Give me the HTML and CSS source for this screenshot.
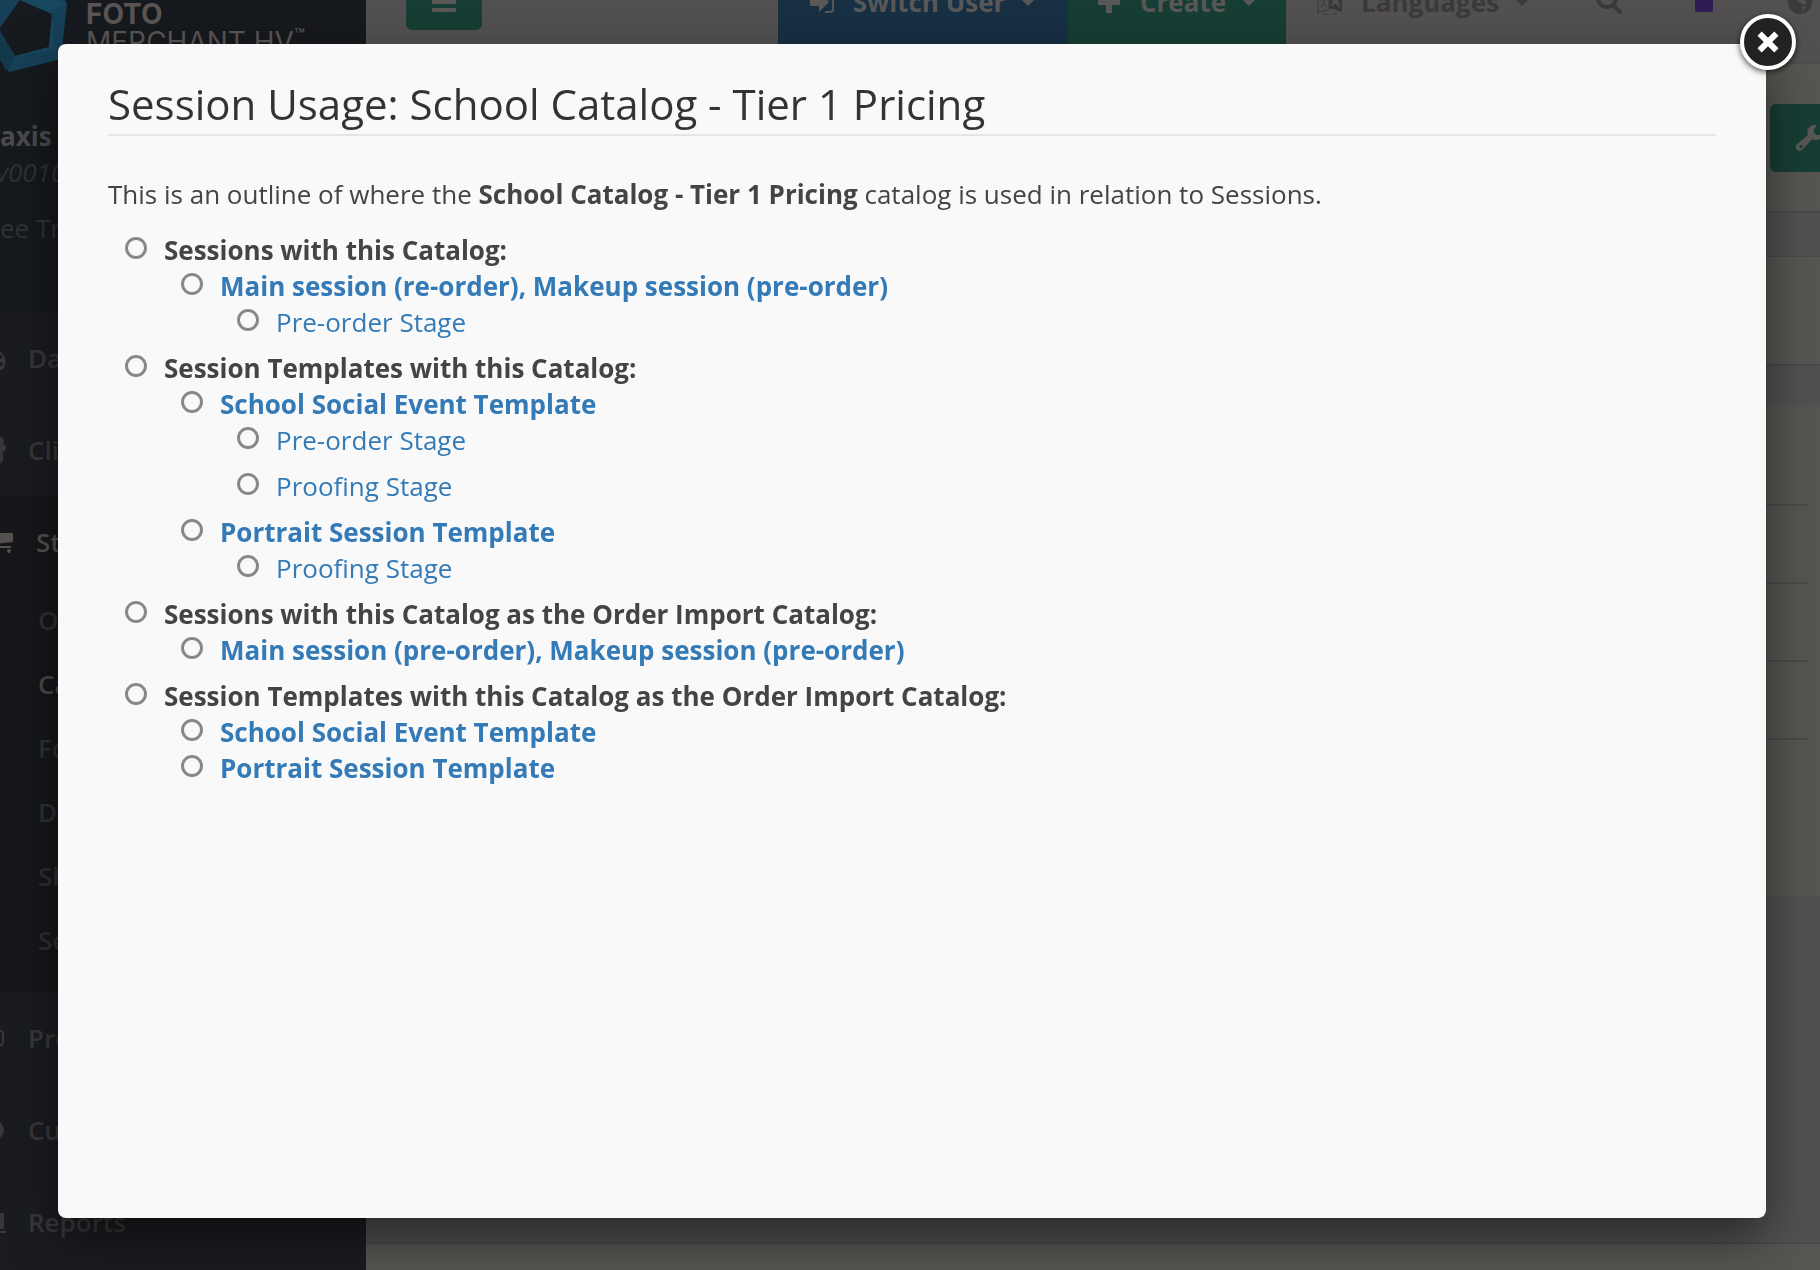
FILE: index.html
```html
<!DOCTYPE html>
<html lang="en">
    <head>
        <meta charset="utf-8">
        <title>Session Usage</title>
        <link rel="stylesheet" href="styles.css">
    </head>
    <body>

        <div class="page">
            <aside class="sidebar">
                <div class="brand">
                    <svg class="brand-mark" viewBox="0 0 68 72">
                        <path fill="#164058" fill-rule="evenodd" d="M-14 -10H60L67 4 61 59 10 72 5 69 -14 30ZM20 0 52 14 49 47 15 56 -1 29Z"/>
                        <path fill="#17465f" d="M20 0 52 14 66 3 40 -6ZM49 47 52 14 55 50 15 56Z"/>
                        <path fill="#14384c" d="M-1 29 15 56 8 71 0 60Z"/>
                    </svg>
                    <div class="brand-name">
                        <b>FOTO</b>
                        <span>MERCHANT HV<sup>™</sup></span>
                    </div>
                </div>
                <div class="profile">
                    <strong>axis</strong>
                    <em>v0010</em>
                    <span>ee Trial</span>
                </div>
                <nav class="menu">
                    <a href="#"><svg class="menu-icon" viewBox="0 0 26 26"><path fill-rule="evenodd" d="M13 4a13 13 0 0 1 11 19q-1 2-3 2H5a13 13 0 0 1 8-21ZM20 10a2 2 0 1 0 0 4 2 2 0 0 0 0-4ZM21 17a2 2 0 1 0 0 4 2 2 0 0 0 0-4Z"/></svg>Dashboard</a>
                    <a href="#"><svg class="menu-icon" viewBox="0 0 26 26"><circle cx="20" cy="4" r="4"/><circle cx="22" cy="11" r="4"/><rect x="14" y="14" width="9" height="12" rx="4"/></svg>Clients</a>
                </nav>
                <nav class="menu menu-open">
                    <a class="active" href="#"><svg class="menu-icon" viewBox="0 0 26 26"><path d="M3 4h22v9l-18 2v2h16v2H5L3 6ZM21 20a2 2 0 1 1 0 4 2 2 0 0 1 0-4Z"/></svg>Store</a>
                    <div class="submenu">
                        <a href="#">Orders</a>
                        <a class="active" href="#">Catalogs</a>
                        <a href="#">Forms</a>
                        <a href="#">Discounts</a>
                        <a href="#">Shipping</a>
                        <a href="#">Settings</a>
                    </div>
                </nav>
                <nav class="menu">
                    <a href="#"><svg class="menu-icon" viewBox="0 0 26 26"><rect x="4" y="6" width="19" height="14" rx="3" fill="none" stroke="currentColor" stroke-width="2"/></svg>Products</a>
                    <a href="#"><svg class="menu-icon" viewBox="0 0 26 26"><circle cx="14" cy="13" r="10"/></svg>Customers</a>
                    <a href="#"><svg class="menu-icon" viewBox="0 0 26 26"><path d="M0 22h26v2H0ZM18 4h6v16h-6Z"/></svg>Reports</a>
                </nav>
            </aside>

            <div class="content">
                <header class="topbar">
                    <button class="toggle" aria-label="Menu"><i></i><i></i><i></i></button>
                    <button class="top-button switch">
                        <svg class="icon" viewBox="0 0 26 26"><path d="M1 9h9V3l10 10-10 10v-6H1Z"/><path fill="none" stroke="currentColor" stroke-width="2" d="M16 3h5q3 0 3 3v14q0 3-3 3h-5"/></svg>
                        Switch User <i class="caret"></i>
                    </button>
                    <button class="top-button create">
                        <svg class="icon" viewBox="0 0 26 26"><path d="M10 2h6v8h8v6h-8v8h-6v-8H2v-6h8Z"/></svg>
                        Create <i class="caret"></i>
                    </button>
                    <button class="top-button languages">
                        <svg class="icon" viewBox="0 0 26 26"><path fill="none" stroke="currentColor" d="M1 3v21l11-4V1ZM4 19l5-10M4 11l6 7M6 25q8 3 14-1"/><path fill-rule="evenodd" d="M12 1l13 4v18l-13-4ZM17 9l-3 8h2l1-2h3l1 3h2l-3-9Z"/></svg>
                        Languages <i class="caret"></i>
                    </button>
                    <button class="top-icon" aria-label="Search"><svg class="icon" viewBox="0 0 26 26"><circle cx="11" cy="9" r="9" fill="none" stroke="currentColor" stroke-width="4"/><path stroke="currentColor" stroke-width="4" stroke-linecap="round" d="m18 17 6 6"/></svg></button>
                    <span class="flag"></span>
                    <button class="top-icon website" aria-label="Website"><svg class="icon" viewBox="0 0 26 26"><path fill-rule="evenodd" d="M13 1a12 12 0 1 1 0 24 12 12 0 0 1 0-24ZM15 9l5 4-2 3-5-2-3-3ZM15 17l4 1-3 4Z"/></svg></button>
                </header>
                <div class="page-head">
                    <button class="tools" aria-label="Tools"><svg class="icon" viewBox="0 0 26 26"><path fill-rule="evenodd" d="M12 10Q10 4 15 1q3-2 6-1l-3 4q-1 3 1 5t4 1l3-2q0 8-8 7l-2-1L6 25q-3 2-5 0t-1-5ZM5 20a1 1 0 1 0 0 3 1 1 0 0 0 0-3Z"/></svg></button>
                </div>
                <div class="panel panel-small"></div>
                <div class="panel panel-table">
                    <div class="row"></div>
                    <div class="row"></div>
                    <div class="row"></div>
                    <div class="row"></div>
                </div>
                <footer class="footer"></footer>
            </div>
        </div>

        <div class="modal" role="dialog" aria-labelledby="modal-title">
            <button class="close" aria-label="Close">
                <svg viewBox="0 0 20 20"><path d="m3 3 14 14M17 3 3 17"/></svg>
            </button>
            <h1 id="modal-title">Session Usage: School Catalog - Tier 1 Pricing</h1>
            <p>This is an outline of where the <strong>School Catalog - Tier 1 Pricing</strong> catalog is used in relation to Sessions.</p>
            <ul class="usage">
                <li><strong>Sessions with this Catalog:</strong>
                    <ul>
                        <li><a href="#"><strong>Main session (re-order), Makeup session (pre-order)</strong></a>
                            <ul>
                                <li><a href="#">Pre-order Stage</a></li>
                            </ul>
                        </li>
                    </ul>
                </li>
                <li><strong>Session Templates with this Catalog:</strong>
                    <ul>
                        <li><a href="#"><strong>School Social Event Template</strong></a>
                            <ul>
                                <li><a href="#">Pre-order Stage</a></li>
                                <li><a href="#">Proofing Stage</a></li>
                            </ul>
                        </li>
                        <li><a href="#"><strong>Portrait Session Template</strong></a>
                            <ul>
                                <li><a href="#">Proofing Stage</a></li>
                            </ul>
                        </li>
                    </ul>
                </li>
                <li><strong>Sessions with this Catalog as the Order Import Catalog:</strong>
                    <ul>
                        <li><a href="#"><strong>Main session (pre-order), Makeup session (pre-order)</strong></a></li>
                    </ul>
                </li>
                <li><strong>Session Templates with this Catalog as the Order Import Catalog:</strong>
                    <ul>
                        <li><a href="#"><strong>School Social Event Template</strong></a></li>
                        <li><a href="#"><strong>Portrait Session Template</strong></a></li>
                    </ul>
                </li>
            </ul>
        </div>

    </body>
</html>
```
FILE: styles.css
```css
*,
*::before {
    box-sizing: border-box;
}

body {
    margin: 0;
    font-family: 'Open Sans', sans-serif;
    font-size: 26px;
    line-height: 36px;
    color: #444;
    background-color: #525051;
    overflow: hidden;
}

a {
    color: #337ab7;
    text-decoration: none;
}

button {
    border: none;
    padding: 0;
    font: inherit;
    cursor: pointer;
}

.page {
    display: flex;
    height: 100vh;
    overflow: hidden;
}

/* sidebar */
.sidebar {
    flex: 0 0 366px;
    background-color: #1b1c20;
    overflow: hidden;
}

.brand {
    display: flex;
    gap: 18px;
    height: 118px;
    background-color: #16191d;
}

.brand-mark {
    width: 68px;
    height: 72px;
}

.brand-name {
    font-family: Inter, sans-serif;
    font-size: 28px;
    line-height: 28px;
    color: #5a5554;
    white-space: nowrap;
}

.brand-name b,
.brand-name span {
    display: block;
}

.brand-name b {
    font-weight: 700;
}

.brand-name sup {
    font-size: 18px;
    line-height: 0;
}

.profile {
    display: flex;
    flex-direction: column;
    height: 194px;
    background-color: #16191d;
    color: #303236;
}

.profile strong {
    color: #4c4b4c;
}

.profile em {
    margin-left: -4px;
}

.profile span {
    margin-top: 20px;
}

.menu a {
    display: flex;
    align-items: center;
    gap: 22px;
    height: 92px;
    margin-left: -20px;
    color: #38383c;
    font-weight: 600;
}

.menu-icon {
    width: 26px;
    height: 26px;
    fill: currentColor;
}

.menu-open {
    background-color: #15171a;
}

.menu > a.active {
    margin-left: -12px;
    color: #55514e;
}

.submenu {
    padding: 0 0 20px 38px;
}

.submenu a {
    height: 64px;
    margin-left: 0;
    color: #2f3034;
}

.submenu .active {
    color: #4c4a4a;
}

/* page under the dialog */
.content {
    flex: 1;
    display: flex;
    flex-direction: column;
}

.topbar {
    display: flex;
    align-items: center;
    flex: 0 0 124px;
    margin-top: -60px;
    color: #3b393a;
    font-weight: 700;
    border-bottom: 1px solid #4d4b4c;
}

.toggle {
    display: flex;
    flex-direction: column;
    align-items: center;
    justify-content: center;
    gap: 4px;
    width: 76px;
    height: 56px;
    margin: 0 auto 0 40px;
    border-radius: 6px;
    background-color: #173e34;
}

.toggle i {
    width: 24px;
    height: 4px;
    border-radius: 1px;
    background-color: #5a5857;
}

.top-button {
    display: flex;
    align-items: center;
    justify-content: center;
    height: 100%;
    color: #5a5857;
}

.icon {
    width: 26px;
    height: 26px;
    fill: currentColor;
}

.caret {
    margin-left: 14px;
    border: 9px solid transparent;
    border-top-color: currentColor;
    border-bottom: none;
}

.switch {
    width: 290px;
    background-color: #183044;
}

.switch .icon,
.create .icon,
.languages .icon {
    margin-right: 18px;
}

.create {
    width: 218px;
    background-color: #173e34;
}

.languages {
    width: 276px;
    color: inherit;
    background: none;
}

.top-icon {
    display: flex;
    width: 94px;
    justify-content: center;
    color: inherit;
    background: none;
}

.website {
    width: 40px;
}

.flag {
    width: 18px;
    height: 20px;
    margin: 0 67px 0 39px;
    border-radius: 2px;
    background-color: #2e1d52;
}

.page-head {
    display: flex;
    justify-content: flex-end;
    align-items: center;
    flex: 0 0 149px;
    background-color: #575652;
    border-bottom: 2px solid #4b494a;
}

.tools {
    width: 50px;
    height: 68px;
    padding-left: 26px;
    border-radius: 6px 0 0 6px;
    color: #5a5857;
    background-color: #173e34;
}

.tools .icon {
    display: block;
}

.panel {
    background-color: #575652;
}

.panel-small {
    height: 110px;
    margin-top: 43px;
    border: solid #4b494a;
    border-width: 1px 0 2px;
}

.panel-table {
    height: 491px;
    margin-top: 39px;
    padding: 23px 12px 0 0;
}

.row {
    height: 78px;
    border-bottom: 2px solid #4c4a48;
}

.footer {
    flex: 0 0 28px;
    margin-top: auto;
    background-color: #575652;
    border-top: 2px solid #4b494a;
}

/* dialog */
.modal {
    position: fixed;
    top: 44px;
    right: 54px;
    bottom: 52px;
    left: 58px;
    padding: 37px 50px;
    border-radius: 8px;
    background-color: #f9f9f9;
    box-shadow: 0 20px 50px rgba(0,0,0,0.5);
}

.modal h1 {
    margin: 0 0 40px;
    padding-bottom: 7px;
    border-bottom: 2px solid #e5e5e5;
    color: #333;
    font-size: 42px;
    line-height: 46px;
    font-weight: 400;
}

.modal p {
    margin: 0 0 20px;
}

.usage,
.usage ul {
    margin: 0;
    padding-left: 56px;
    list-style: none;
}

.usage li::before {
    content: '';
    display: inline-block;
    width: 22px;
    height: 22px;
    margin: 0 17px 0 -39px;
    border: 3px solid #888;
    border-radius: 50%;
    vertical-align: 1px;
}

.usage > li,
.usage ul ul li {
    margin-bottom: 10px;
}

.close {
    position: absolute;
    top: -30px;
    right: -30px;
    display: flex;
    align-items: center;
    justify-content: center;
    width: 56px;
    height: 56px;
    border: 4px solid #fff;
    border-radius: 50%;
    background-color: #222;
    box-shadow: 0 2px 6px rgba(0,0,0,0.7);
}

.close svg {
    width: 24px;
    height: 24px;
    stroke: #fff;
    stroke-width: 5;
}
```
